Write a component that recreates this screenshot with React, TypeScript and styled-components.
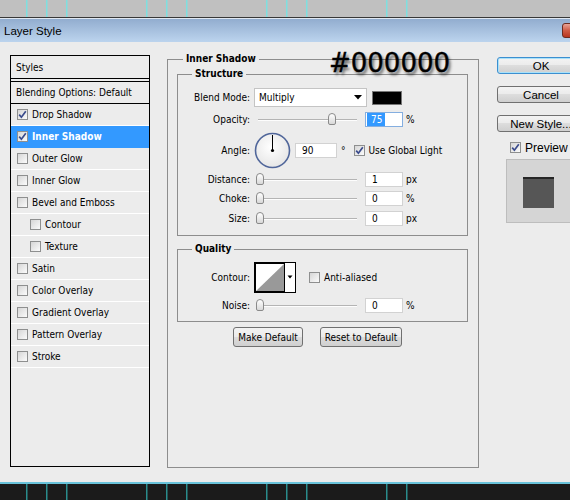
import React from "react";
import styled, { createGlobalStyle } from "styled-components";

const UI = `"DejaVu Sans Condensed", "Liberation Sans", Arial, sans-serif`;
const WIN = `"Liberation Sans", Arial, sans-serif`;

const GlobalStyle = createGlobalStyle`
  html, body { margin: 0; padding: 0; background: #ececec; }
  body { font-family: ${UI}; font-size: 10px; color: #000; }
  #root { width: 570px; height: 500px; overflow: hidden; }
`;

const TICKS = [26, 46, 66, 146, 166, 186, 266, 286, 306, 386, 406];

const Page = styled.div`
  width: 570px;
  height: 500px;
  display: flex;
  flex-direction: column;
  overflow: hidden;
  background: #ececec;
`;

const TopStrip = styled.div`
  height: 17px;
  flex: none;
  background: #c0c0c0;
  border-bottom: 1px solid #383838;
  svg { display: block; }
`;

const BottomStrip = styled.div`
  height: 16px;
  flex: none;
  background: #1b1b1b;
  border-top: 2px solid #69c3da;
  svg { display: block; }
`;

const TitleBar = styled.div`
  height: 23px;
  flex: none;
  border-top: 1px solid #dfe7f1;
  background: linear-gradient(#92adcf, #bcd4ee);
  display: flex;
  align-items: flex-start;
  justify-content: space-between;
  padding-left: 4px;
  font-family: ${WIN};
  font-size: 11.5px;
  line-height: 24px;
  color: #000;
`;

const CloseButton = styled.div`
  width: 30px;
  height: 15px;
  margin-top: 4px;
  margin-right: -22px;
  box-sizing: border-box;
  border: 1px solid #6d2b20;
  border-radius: 3px;
  background: linear-gradient(#e9a497, #cf5b45 50%, #b8351f);
`;

const Body = styled.div`
  flex: 1;
  display: flex;
  align-items: flex-start;
  overflow: hidden;
`;

const LeftPanel = styled.div`
  flex: none;
  margin: 13px 0 0 10px;
  width: 140px;
  height: 412px;
  box-sizing: border-box;
  border: 1px solid #000;
`;

const PanelHeader = styled.div`
  height: 22px;
  border-bottom: 1px solid #000;
  margin-bottom: 2px;
  display: flex;
  align-items: center;
  padding-left: 5px;
`;

const BlendRow = styled.div`
  height: 21px;
  border-top: 1px solid #000;
  border-bottom: 1px solid #000;
  display: flex;
  align-items: center;
  padding-left: 5px;
`;

const Item = styled.div<{ $indent?: boolean; $selected?: boolean }>`
  height: 21px;
  border-bottom: 1px solid ${(p) => (p.$selected ? "#3399ff" : "#ffffff")};
  display: flex;
  align-items: center;
  gap: 4px;
  padding-left: ${(p) => (p.$indent ? 19 : 6)}px;
  background: ${(p) => (p.$selected ? "#3399ff" : "transparent")};
  color: ${(p) => (p.$selected ? "#fff" : "#000")};
  font-weight: ${(p) => (p.$selected ? 700 : 400)};
`;

const Box = styled.span`
  width: 11px;
  height: 11px;
  flex: none;
  box-sizing: border-box;
  border: 1px solid #8e8f8f;
  background: linear-gradient(135deg, #d6d6d6, #fbfbfb);
  display: inline-flex;
  align-items: center;
  justify-content: center;
  svg { display: block; }
`;

const Checkbox = ({ checked }: { checked?: boolean }) => (
  <Box>
    {checked && (
      <svg width="9" height="9" viewBox="0 0 9 9">
        <path d="M1.2 4.6 L3.4 7.2 L7.8 1.2" stroke="#3a4b8c" strokeWidth="1.7" fill="none" />
      </svg>
    )}
  </Box>
);

const Middle = styled.div`
  position: relative;
  flex: none;
  margin: 10px 0 0 17px;
`;

const OuterSet = styled.fieldset`
  margin: 0;
  width: 312px;
  height: 416px;
  box-sizing: border-box;
  border: 1px solid #8d8d8d;
  padding: 1px 10px 0 9px;
  min-width: 0;
`;

const Legend = styled.legend<{ $offset: number }>`
  font-weight: 700;
  font-size: 10px;
  line-height: 14px;
  padding: 0 3px;
  margin-left: ${(p) => p.$offset}px;
`;

const Group = styled.fieldset<{ $mt: number; $pt: number; $pb: number }>`
  margin: ${(p) => p.$mt}px 0 0 0;
  padding: ${(p) => p.$pt}px 0 ${(p) => p.$pb}px 0;
  border: 1px solid #8d8d8d;
  min-width: 0;
`;

const Row = styled.div<{ $h: number; $mt?: number }>`
  display: grid;
  grid-template-columns: 72px auto;
  column-gap: 4px;
  align-items: center;
  height: ${(p) => p.$h}px;
  margin-top: ${(p) => p.$mt ?? 0}px;
`;

const Label = styled.span`
  text-align: right;
  white-space: nowrap;
`;

const Controls = styled.div`
  display: flex;
  align-items: center;
  white-space: nowrap;
`;

const Select = styled.div`
  width: 113px;
  height: 19px;
  box-sizing: border-box;
  border: 1px solid #c4c4c4;
  background: #fff;
  display: flex;
  align-items: center;
  justify-content: space-between;
  padding: 0 4px 0 4px;
  svg { display: block; }
`;

const Swatch = styled.div`
  width: 30px;
  height: 14px;
  box-sizing: border-box;
  margin-left: 5px;
  background: #000;
  border: 1px solid #767676;
`;

const Field = styled.div<{ $w: number; $focus?: boolean; $ml?: number }>`
  width: ${(p) => p.$w}px;
  height: 15px;
  margin-left: ${(p) => p.$ml ?? 7}px;
  box-sizing: border-box;
  background: #fff;
  border: 1px solid ${(p) => (p.$focus ? "#84aee0" : "#d2d2d2")};
  display: flex;
  align-items: center;
  padding-left: ${(p) => (p.$focus ? 1 : 6)}px;
`;

const Selected = styled.span`
  background: #3399ff;
  color: #fff;
  padding: 0 3px 0 4px;
  line-height: 13px;
`;

const Unit = styled.span<{ $ml?: number }>`
  margin-left: ${(p) => p.$ml ?? 3}px;
`;

const CheckLabel = styled.span<{ $ml: number }>`
  display: inline-flex;
  align-items: center;
  gap: 4px;
  margin-left: ${(p) => p.$ml}px;
`;

const SliderWrap = styled.div`
  position: relative;
  width: 104px;
  height: 15px;
  flex: none;
`;

const Track = styled.div`
  position: absolute;
  left: 4px;
  right: 1px;
  top: 7px;
  height: 1px;
  background: #b4b4b4;
  border-bottom: 1px solid #fdfdfd;
`;

const Thumb = styled.div`
  position: absolute;
  top: 1px;
  width: 8px;
  height: 12px;
  margin-left: -4px;
  box-sizing: border-box;
  border: 1px solid #8a8a8a;
  border-radius: 4px 4px 2px 2px;
  background: linear-gradient(#ffffff, #d8d8d8);
`;

const Slider = ({ value }: { value: number }) => (
  <SliderWrap>
    <Track />
    <Thumb style={{ left: 6 + value * 0.96 }} />
  </SliderWrap>
);

const Dial = styled.svg`
  display: block;
  flex: none;
`;

const ContourPicker = styled.svg`
  display: block;
  flex: none;
`;

const ButtonRow = styled.div`
  display: flex;
  gap: 17px;
  margin-top: 5px;
  padding-left: 56px;
`;

const PushButton = styled.div<{ $w: number }>`
  width: ${(p) => p.$w}px;
  height: 20px;
  box-sizing: border-box;
  border: 1px solid #707070;
  border-radius: 3px;
  background: linear-gradient(#f3f3f3, #ebebeb 50%, #dddddd 50%, #cfcfcf);
  display: flex;
  align-items: center;
  justify-content: center;
`;

const HexLabel = styled.div`
  position: absolute;
  left: 162px;
  top: -2px;
  font-family: "DejaVu Sans", "Liberation Sans", sans-serif;
  font-size: 26px;
  line-height: 26px;
  color: #000;
  text-shadow: 2px 3px 3px rgba(0, 0, 0, 0.6);
  -webkit-text-stroke: 0.4px #000;
  white-space: nowrap;
`;

const RightColumn = styled.div`
  flex: none;
  width: 88px;
  margin: 15px 0 0 18px;
  display: flex;
  flex-direction: column;
`;

const DialogButton = styled.div<{ $default?: boolean }>`
  height: 17px;
  margin-bottom: 12px;
  box-sizing: border-box;
  border: 1px solid ${(p) => (p.$default ? "#3c8fd0" : "#707070")};
  border-radius: 3px;
  box-shadow: ${(p) => (p.$default ? "inset 0 0 0 1px #a9e1f9" : "none")};
  background: linear-gradient(#f3f3f3, #ebebeb 50%, #dddddd 50%, #cfcfcf);
  display: flex;
  align-items: center;
  justify-content: center;
  font-family: ${WIN};
  font-size: 11.5px;
  white-space: nowrap;
  overflow: hidden;
`;

const PreviewRow = styled.div`
  display: flex;
  align-items: center;
  gap: 4px;
  height: 15px;
  margin-top: -4px;
  padding-left: 13px;
  font-family: ${WIN};
  font-size: 12px;
`;

const PreviewBox = styled.div`
  margin: 4px 0 0 9px;
  width: 80px;
  height: 64px;
  box-sizing: border-box;
  border: 1px solid #bdbdbd;
  background: #d5d5d5;
  padding: 17px 0 0 16px;
`;

const PreviewSwatch = styled.div`
  width: 31px;
  height: 31px;
  box-sizing: border-box;
  background: #565656;
  border-top: 2px solid #262626;
`;

const Ticks = ({ color, h }: { color: string; h: number }) => (
  <svg width="570" height={h} viewBox={`0 0 570 ${h}`}>
    {TICKS.map((x) => (
      <rect key={x} x={x} y={0} width={1.5} height={h} fill={color} />
    ))}
  </svg>
);

const styles: { name: string; checked?: boolean; selected?: boolean; indent?: boolean }[] = [
  { name: "Drop Shadow", checked: true },
  { name: "Inner Shadow", checked: true, selected: true },
  { name: "Outer Glow" },
  { name: "Inner Glow" },
  { name: "Bevel and Emboss" },
  { name: "Contour", indent: true },
  { name: "Texture", indent: true },
  { name: "Satin" },
  { name: "Color Overlay" },
  { name: "Gradient Overlay" },
  { name: "Pattern Overlay" },
  { name: "Stroke" },
];

const DownArrow = () => (
  <svg width="8" height="5" viewBox="0 0 8 5">
    <path d="M0 0 H8 L4 4.5 Z" fill="#000" />
  </svg>
);

export default function App() {
  return (
    <Page>
      <GlobalStyle />
      <TopStrip>
        <Ticks color="#7fdfdf" h={17} />
      </TopStrip>
      <TitleBar>
        <span>Layer Style</span>
        <CloseButton />
      </TitleBar>
      <Body>
        <LeftPanel>
          <PanelHeader>Styles</PanelHeader>
          <BlendRow>Blending Options: Default</BlendRow>
          {styles.map((s) => (
            <Item key={s.name} $indent={s.indent} $selected={s.selected}>
              <Checkbox checked={s.checked} />
              <span>{s.name}</span>
            </Item>
          ))}
        </LeftPanel>

        <Middle>
          <OuterSet>
            <Legend $offset={6}>Inner Shadow</Legend>
            <Group $mt={0} $pt={7} $pb={9}>
              <Legend $offset={14}>Structure</Legend>
              <Row $h={19}>
                <Label>Blend Mode:</Label>
                <Controls>
                  <Select>
                    <span>Multiply</span>
                    <DownArrow />
                  </Select>
                  <Swatch />
                </Controls>
              </Row>
              <Row $h={15} $mt={5}>
                <Label>Opacity:</Label>
                <Controls>
                  <Slider value={75} />
                  <Field $w={38} $focus>
                    <Selected>75</Selected>
                  </Field>
                  <Unit>%</Unit>
                </Controls>
              </Row>
              <Row $h={36} $mt={5}>
                <Label>Angle:</Label>
                <Controls>
                  <Dial width="37" height="37" viewBox="0 0 37 37">
                    <defs>
                      <radialGradient id="dialFill" cx="0.45" cy="0.4" r="0.6">
                        <stop offset="0" stopColor="#ffffff" />
                        <stop offset="1" stopColor="#e6e6e6" />
                      </radialGradient>
                    </defs>
                    <circle cx="18.5" cy="18.5" r="17" fill="url(#dialFill)" stroke="#50669a" strokeWidth="1.6" />
                    <line x1="18.5" y1="18.5" x2="18.5" y2="3" stroke="#000" strokeWidth="1" />
                    <circle cx="18.5" cy="18.5" r="1.6" fill="#000" />
                  </Dial>
                  <Field $w={42} $ml={4}>90</Field>
                  <Unit $ml={4}>°</Unit>
                  <CheckLabel $ml={8}>
                    <Checkbox checked />
                    <span>Use Global Light</span>
                  </CheckLabel>
                </Controls>
              </Row>
              <Row $h={15} $mt={4}>
                <Label>Distance:</Label>
                <Controls>
                  <Slider value={0} />
                  <Field $w={38}>1</Field>
                  <Unit>px</Unit>
                </Controls>
              </Row>
              <Row $h={15} $mt={4}>
                <Label>Choke:</Label>
                <Controls>
                  <Slider value={0} />
                  <Field $w={38}>0</Field>
                  <Unit>%</Unit>
                </Controls>
              </Row>
              <Row $h={15} $mt={5}>
                <Label>Size:</Label>
                <Controls>
                  <Slider value={0} />
                  <Field $w={38}>0</Field>
                  <Unit>px</Unit>
                </Controls>
              </Row>
            </Group>

            <Group $mt={6} $pt={6} $pb={8}>
              <Legend $offset={14}>Quality</Legend>
              <Row $h={31}>
                <Label>Contour:</Label>
                <Controls>
                  <ContourPicker width="42" height="31" viewBox="0 0 42 31">
                    <rect x="0" y="0" width="42" height="31" fill="#000" />
                    <rect x="2" y="2" width="28" height="27" fill="#fff" />
                    <polygon points="2,29 30,2 30,29" fill="#999" />
                    <rect x="31" y="1" width="10" height="29" fill="#fff" />
                    <path d="M33.5 13.5 H38.5 L36 16.5 Z" fill="#000" />
                  </ContourPicker>
                  <CheckLabel $ml={13}>
                    <Checkbox />
                    <span>Anti-aliased</span>
                  </CheckLabel>
                </Controls>
              </Row>
              <Row $h={15} $mt={5}>
                <Label>Noise:</Label>
                <Controls>
                  <Slider value={0} />
                  <Field $w={38}>0</Field>
                  <Unit>%</Unit>
                </Controls>
              </Row>
            </Group>

            <ButtonRow>
              <PushButton $w={70}>Make Default</PushButton>
              <PushButton $w={82}>Reset to Default</PushButton>
            </ButtonRow>
          </OuterSet>
          <HexLabel>#000000</HexLabel>
        </Middle>

        <RightColumn>
          <DialogButton $default>OK</DialogButton>
          <DialogButton>Cancel</DialogButton>
          <DialogButton>New Style...</DialogButton>
          <PreviewRow>
            <Checkbox checked />
            <span>Preview</span>
          </PreviewRow>
          <PreviewBox>
            <PreviewSwatch />
          </PreviewBox>
        </RightColumn>
      </Body>
      <BottomStrip>
        <Ticks color="#2a8c8c" h={16} />
      </BottomStrip>
    </Page>
  );
}
